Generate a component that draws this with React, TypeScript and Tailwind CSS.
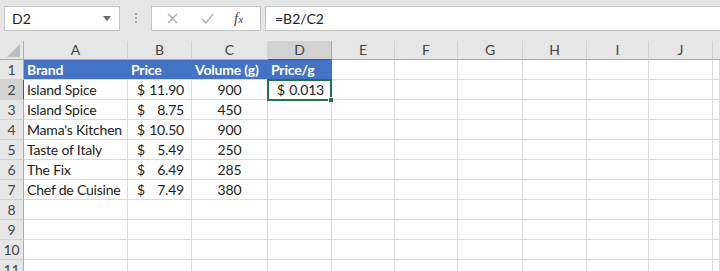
import React from 'react';

const cols = [
  { name: 'A', w: 104 },
  { name: 'B', w: 64 },
  { name: 'C', w: 76 },
  { name: 'D', w: 64 },
  { name: 'E', w: 63 },
  { name: 'F', w: 63 },
  { name: 'G', w: 65 },
  { name: 'H', w: 64 },
  { name: 'I', w: 62 },
  { name: 'J', w: 64 },
];

const rows: [string, string, string][] = [
  ['Island Spice', '11.90', '900'],
  ['Island Spice', '8.75', '450'],
  ["Mama's Kitchen", '10.50', '900'],
  ['Taste of Italy', '5.49', '250'],
  ['The Fix', '6.49', '285'],
  ['Chef de Cuisine', '7.49', '380'],
];

const font = { fontFamily: 'Lato, "Liberation Sans", sans-serif' };

function Money({ value }: { value: string }) {
  return (
    <div className="flex h-full items-center justify-between pl-[9px] pr-[7px]">
      <span>$</span>
      <span>{value}</span>
    </div>
  );
}

export default function App() {
  const cell = 'h-[20px] border-r border-b border-[#dadada] bg-white text-[14px] tracking-[-0.2px] leading-[19px] text-[#222] overflow-hidden whitespace-nowrap';
  const rowHead = 'h-[20px] border-r border-b border-r-[#ababab] border-b-[#d4d4d4] bg-[#e6e6e6] text-center text-[14px] leading-[19px] text-[#444]';

  return (
    <div className="h-[271px] w-[720px] overflow-hidden bg-[#e6e6e6]" style={font}>
      {/* formula bar */}
      <div className="flex h-[41px] items-start pt-[6px]">
        <div className="ml-[4px] flex h-[25px] w-[116px] items-center justify-between border border-[#c6c6c6] bg-white pl-[7px] pr-[8px] text-[14px] text-[#222]">
          <span>D2</span>
          <svg width="8" height="5" viewBox="0 0 8 5">
            <path d="M0 0h8L4 5z" fill="#666" />
          </svg>
        </div>
        <div className="flex w-[31px] flex-col items-center gap-[2px] pt-[7px]">
          <span className="h-[2px] w-[2px] bg-[#a6a6a6]" />
          <span className="h-[2px] w-[2px] bg-[#a6a6a6]" />
          <span className="h-[2px] w-[2px] bg-[#a6a6a6]" />
        </div>
        <div className="flex h-[25px] w-[110px] items-center border border-[#c6c6c6] bg-white">
          <svg className="ml-[15px]" width="11" height="11" viewBox="0 0 11 11">
            <path d="M1 1l9 9M10 1l-9 9" stroke="#a9a9a9" strokeWidth="1.3" />
          </svg>
          <svg className="ml-[23px]" width="13" height="11" viewBox="0 0 13 11">
            <path d="M1 6l4 4 7-9" stroke="#b0b0b0" strokeWidth="1.5" fill="none" />
          </svg>
          <span
            className="ml-[20px] text-[15px] italic text-[#444]"
            style={{ fontFamily: '"Liberation Serif", serif' }}
          >
            f<span className="text-[11px]">x</span>
          </span>
        </div>
        <div className="ml-[4px] flex h-[25px] flex-1 items-center border-y border-l border-[#c6c6c6] bg-white pl-[9px] text-[14px] text-[#222]">
          =B2/C2
        </div>
      </div>

      {/* grid */}
      <div
        className="relative grid"
        style={{ gridTemplateColumns: `24px ${cols.map((c) => c.w + 'px').join(' ')} 1fr` }}
      >
        {/* column headers */}
        <div className="relative h-[19px] border-r border-b border-[#ababab] bg-[#e6e6e6]">
          <svg className="absolute bottom-[2px] right-[3px]" width="13" height="13" viewBox="0 0 13 13">
            <path d="M13 0V13H0z" fill="#bdbdbd" />
          </svg>
        </div>
        {cols.map((c) => (
          <div
            key={c.name}
            className={
              'h-[19px] border-r text-center text-[14px] leading-[18px] text-[#444] ' +
              (c.name === 'D'
                ? 'border-b border-b-[#217346] border-r-[#ababab] bg-[#d2d2d2]'
                : 'border-b border-b-[#ababab] border-r-[#d0d0d0] bg-[#e6e6e6]')
            }
          >
            {c.name}
          </div>
        ))}
        <div className="h-[19px] border-b border-[#ababab] bg-[#e6e6e6]" />

        {/* row 1 header */}
        <div className={rowHead}>1</div>
        <div className="col-span-4 flex h-[20px] whitespace-nowrap border-b border-[#dadada] bg-[#4472c4] text-[14px] font-bold leading-[19px] tracking-[-0.2px] text-white">
          <div className="w-[104px] pl-[3px]">Brand</div>
          <div className="w-[64px] pl-[3px]">Price</div>
          <div className="w-[76px] pl-[3px]">Volume (g)</div>
          <div className="w-[64px] pl-[3px]">Price/g</div>
        </div>
        {cols.slice(4).map((c) => (
          <div key={c.name} className={cell} />
        ))}
        <div className={cell} />

        {/* data rows */}
        {Array.from({ length: 10 }).map((_, i) => {
          const n = i + 2;
          const d = rows[i];
          const selected = n === 2;
          return (
            <React.Fragment key={n}>
              <div
                className={
                  selected
                    ? 'h-[20px] border-r border-b border-r-[#217346] border-b-[#d4d4d4] bg-[#d2d2d2] text-center text-[14px] leading-[19px] text-[#444]'
                    : rowHead
                }
              >
                {n}
              </div>
              <div className={cell + ' pl-[3px]'}>{d ? d[0] : ''}</div>
              <div className={cell}>{d ? <Money value={d[1]} /> : null}</div>
              <div className={cell + ' text-center'}>{d ? d[2] : ''}</div>
              <div className={cell}>{selected ? <Money value="0.013" /> : null}</div>
              {cols.slice(4).map((c) => (
                <div key={c.name} className={cell} />
              ))}
              <div className={cell} />
            </React.Fragment>
          );
        })}

        {/* active cell outline on D2 */}
        <div className="pointer-events-none absolute left-[267px] top-[38px] h-[22px] w-[65px] border-2 border-[#217346]">
          <div className="absolute -bottom-[4px] -right-[4px] h-[6px] w-[6px] border border-white bg-[#217346]" />
        </div>
      </div>
    </div>
  );
}
